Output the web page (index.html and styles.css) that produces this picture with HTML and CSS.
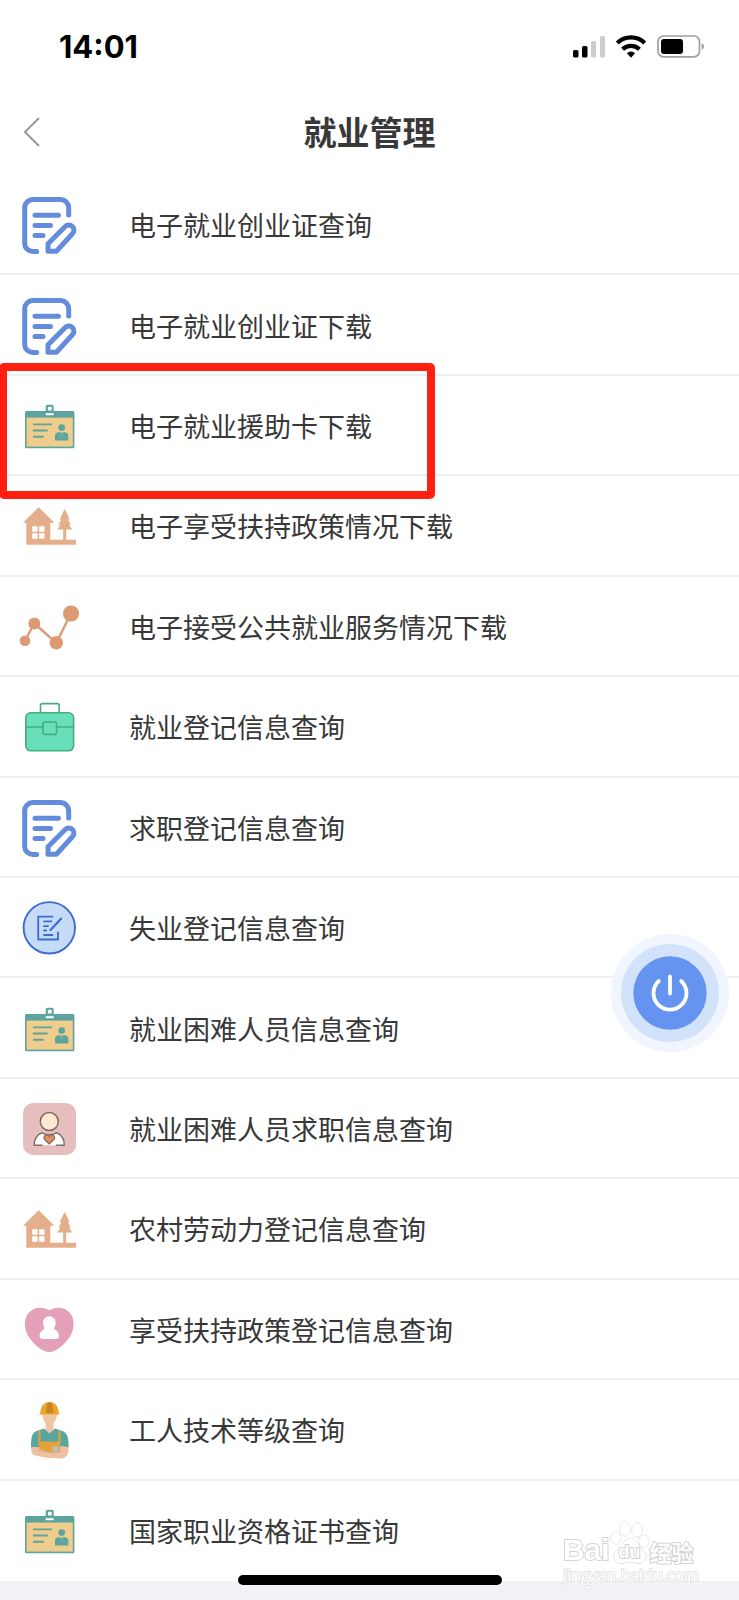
FILE: index.html
```html
<!DOCTYPE html>
<html lang="zh-CN">
<head>
<meta charset="utf-8">
<meta name="viewport" content="width=device-width, initial-scale=1">
<title>就业管理</title>
<link rel="stylesheet" href="styles.css">
</head>
<body>
<svg class="sprite" aria-hidden="true">
  <symbol id="doc" viewBox="0 0 60 60">
    <g fill="none" stroke="#648cdc" stroke-width="5" stroke-linecap="round" stroke-linejoin="round">
      <path d="M49.7 20V12.6a8 8 0 0 0-8-8h-28a8 8 0 0 0-8 8v35.8a8 8 0 0 0 8 8h4"/>
      <path d="M16 20.2h23.4M16 30.5h15.5M16 40.6h8"/>
      <path d="M29 56.2v-7.4L46.2 31.6a5 5 0 0 1 7.2 7.2L37.4 56.2Z"/>
    </g>
  </symbol>
  <symbol id="card" viewBox="0 0 60 60">
    <rect x="6" y="15" width="49.4" height="37.3" rx="1.5" fill="#5ba59e"/>
    <rect x="7.6" y="21.6" width="46.2" height="29" fill="#f1cd8d"/>
    <path d="M26.7 19v-8.6q0-1.6 1.6-1.6h4.8q1.6 0 1.6 1.6V19Z" fill="#5ba59e"/>
    <rect x="28.9" y="10.8" width="3.8" height="3.8" rx=".8" fill="#fff"/>
    <path d="M26.7 17.2h8v2h-8z" fill="#fff"/>
    <path d="M14 28.4h19M14 34.5h14.7M14 40.8h10.7" stroke="#5ba59e" stroke-width="1.9"/>
    <circle cx="42.7" cy="31.6" r="3.3" fill="#5ba59e"/>
    <path d="M36 44.4v-5q0-2 2-2.600l3-1 1.700 7 1.700-7 3 1q2 .6 2 2.600v5Z" fill="#5ba59e"/>
    <path d="m42.700 36 1 1.200-.7 6h-.6l-.7-6z" fill="#5ba59e"/>
  </symbol>
  <symbol id="house" viewBox="0 0 60 60">
    <path d="M19.7 11.2 35.4 26.8h-4.1v17h12.9V33.5h-6l3.3-5h-2l3-5h-1.8l5-10.8 5 10.8h-1.8l3 5h-2l3.3 5h-6v10.3H57v5H7.3V26.8H4Z" fill="#e3ae89"/>
    <path d="M13.3 30.3h5.3v5.4h-5.3zM20.2 30.3h5.3v5.4h-5.3zM13.3 37.3h5.3v5.4h-5.3zM20.2 37.3h5.3v5.4h-5.3z" fill="#fff"/>
  </symbol>
  <symbol id="chart" viewBox="0 0 60 60">
    <path d="m6 43.8 9.3-17.3 22 19.3L52 16.5" fill="none" stroke="#dd9b74" stroke-width="2.4"/>
    <g fill="#dd9b74"><circle cx="6" cy="43.8" r="5.3"/><circle cx="15.3" cy="26.5" r="6"/><circle cx="37.3" cy="45.8" r="6.8"/><circle cx="52" cy="16.5" r="8.1"/></g>
  </symbol>
  <symbol id="briefcase" viewBox="0 0 60 60">
    <g stroke="#49ab80" stroke-width="1.6" fill="#67dfba">
      <path d="M21.5 16V8.6q0-2 2-2h14.7q2 0 2 2V16" fill="none"/>
      <rect x="6.8" y="15.8" width="47.8" height="38" rx="5"/>
      <path d="M6.8 30h47.8"/>
      <rect x="24" y="25" width="13.5" height="12.4" rx="2"/>
    </g>
  </symbol>
  <symbol id="edit" viewBox="0 0 60 60">
    <circle cx="30.3" cy="29.8" r="25.7" fill="#c5dbf7" stroke="#3b6cd1" stroke-width="1.9"/>
    <g fill="none" stroke="#3b6cd1" stroke-width="1.8" stroke-linejoin="round" stroke-linecap="round">
      <path d="M33.5 18.7H19.2v22.8H39v-7.2"/>
      <path d="M25 23.4h7.5M25 28.2h4M25 32.5h2.2M25 37h8.5"/>
      <path d="M31.5 32 42.2 20.6" stroke-width="2.2"/>
    </g>
  </symbol>
  <symbol id="person" viewBox="0 0 60 60">
    <rect x="4" y="4" width="53" height="52" rx="10" fill="#e6bebe"/>
    <path d="M15.3 46.2c-.4-4.8 2-10.4 7.7-12.4 4.500 2.400 10 2.400 14.500 0 5.700 2 8.100 7.600 7.700 12.400Z" fill="#fff"/>
    <path d="M23.500 46.200h-8.200c-.4-4.800 2-10.400 7.700-12.400 4.500 2.400 10 2.400 14.500 0 5.700 2 8.100 7.600 7.700 12.400h-8.200" fill="none" stroke="#806d66" stroke-width="1.500"/>
    <circle cx="30.300" cy="22.500" r="9" fill="#fce9cf" stroke="#806d66" stroke-width="1.500"/>
    <path d="M30.300 45 25.700 40.500c-2.600-3.400 2.200-6.500 4.600-2.900 2.400-3.600 7.200-.5 4.600 2.900Z" fill="#e88b5b" stroke="#806d66" stroke-width="1.200"/>
  </symbol>
  <symbol id="heart" viewBox="0 0 60 60">
    <path d="M30.300 10.200C37 6 46 7 51 13c5.500 6.700 4.500 17-1 25-5 7-13 14-19.700 14S15.500 45 10.500 38C5 30 4 19.700 9.500 13c5-6 14-7 20.800-2.800Z" fill="#e5a0b9"/>
    <path d="M30.300 16.300a6.300 6.300 0 0 1 6.400 6.500c0 2.500-1.200 4-1.700 5.500-.4 1.500 5 1.800 5 7.500 0 2.300-1.300 3.300-3.200 3.300h-13c-1.900 0-3.200-1-3.200-3.300 0-5.700 5.400-6 5-7.500-.5-1.500-1.700-3-1.700-5.500a6.300 6.300 0 0 1 6.400-6.500Z" fill="#fff"/>
  </symbol>
  <symbol id="worker" viewBox="0 0 60 60">
    <path d="M23.500 13h14.400c0 5.500-1.700 8.500-3.400 10.500V30l-4 5-4-5v-6.500c-1.700-2-3-5-3-10.500Z" fill="#f0c6a5"/>
    <path d="M12 47.500c0-8 .4-14.500 5-16.300l8-2.700 5.500 5 5.500-5 8 2.700c4.800 1.800 5.700 8.300 5.700 16.300l-6 2H18Z" fill="#58a69e"/>
    <path d="M12 47h7l22-1 8.500 1c.6 7-2.500 11-6 11.300-8 .8-22-1.300-28-3-2.700-.8-3.500-4.500-3.500-8.300Z" fill="#ecc0a0"/>
    <path d="M20.500 31v11.500h20V31" fill="none" stroke="#dfa23d" stroke-width="2.200"/>
    <path d="M19.500 42h21.500v10H28l-8-3Z" fill="#e3a33b"/>
    <path d="M18 51c8-1 12 2.500 17 2l8-2" fill="none" stroke="#dba788" stroke-width="1"/>
    <rect x="33.500" y="46.500" width="6" height="5" rx="1" fill="#b5c1cb"/>
    <path d="M21.200 13.300C21.600 6 25 2 30.500 2s9 4 9.400 11.300l1.100 1.200H20Z" fill="#eba52c"/>
    <path d="M27 13c.2-4.500.8-8 1.800-10.500h3.500C33.500 5 34 8.500 34.200 13Z" fill="#c98525"/>
  </symbol>
</svg>

<header class="header">
  <div class="status">
    <time class="clock">14:01</time>
    <svg class="indicators" viewBox="0 0 132 24" aria-label="信号、无线网络和电池">
      <rect x="0" y="15" width="5.5" height="7.5" rx="1.5"/>
      <rect x="9" y="11" width="5.5" height="11.5" rx="1.5"/>
      <g fill="#cdcdcd"><rect x="18" y="6" width="5" height="16.5" rx="1.5"/><rect x="27" y="1" width="5" height="21.5" rx="1.5"/></g>
      <g fill="none" stroke="#000" stroke-width="4.2"><path d="M44.3 8.1a19.300 19.300 0 0 1 27.400 0"/><path d="M49.600 14.300a11.900 11.900 0 0 1 16.800 0"/></g>
      <path d="M53.900 18.300a5.800 5.800 0 0 1 8.200 0L58 22.700Z"/>
      <rect x="85" y="1" width="41.500" height="20.800" rx="5.500" fill="none" stroke="#9f9f9f" stroke-width="1.700"/>
      <rect x="88" y="4" width="22" height="15" rx="3"/>
      <path d="M128.700 8.500q2.300.7 2.300 3t-2.300 3Z" fill="#999"/>
    </svg>
  </div>
  <nav class="nav">
    <button class="back" type="button" aria-label="返回">
      <svg viewBox="0 0 18 32" width="18" height="32"><path d="M16 2 2 16l14 14" fill="none" stroke="#999" stroke-width="2"/></svg>
    </button>
    <h1 class="title">就业管理</h1>
  </nav>
</header>

<main class="list">
  <a class="row" href="#"><svg class="icon"><use href="#doc"/></svg><span>电子就业创业证查询</span></a>
  <a class="row" href="#"><svg class="icon"><use href="#doc"/></svg><span>电子就业创业证下载</span></a>
  <a class="row marked" href="#"><svg class="icon"><use href="#card"/></svg><span>电子就业援助卡下载</span></a>
  <a class="row" href="#"><svg class="icon"><use href="#house"/></svg><span>电子享受扶持政策情况下载</span></a>
  <a class="row" href="#"><svg class="icon"><use href="#chart"/></svg><span>电子接受公共就业服务情况下载</span></a>
  <a class="row" href="#"><svg class="icon"><use href="#briefcase"/></svg><span>就业登记信息查询</span></a>
  <a class="row" href="#"><svg class="icon"><use href="#doc"/></svg><span>求职登记信息查询</span></a>
  <a class="row" href="#"><svg class="icon"><use href="#edit"/></svg><span>失业登记信息查询</span></a>
  <a class="row" href="#"><svg class="icon"><use href="#card"/></svg><span>就业困难人员信息查询</span></a>
  <a class="row" href="#"><svg class="icon"><use href="#person"/></svg><span>就业困难人员求职信息查询</span></a>
  <a class="row" href="#"><svg class="icon"><use href="#house"/></svg><span>农村劳动力登记信息查询</span></a>
  <a class="row" href="#"><svg class="icon"><use href="#heart"/></svg><span>享受扶持政策登记信息查询</span></a>
  <a class="row" href="#"><svg class="icon"><use href="#worker"/></svg><span>工人技术等级查询</span></a>
  <a class="row" href="#"><svg class="icon"><use href="#card"/></svg><span>国家职业资格证书查询</span></a>
</main>

<footer class="bottom"></footer>

<button class="power" type="button" aria-label="退出">
  <svg viewBox="0 0 118 118" width="118" height="118">
    <circle cx="59" cy="59" r="59" fill="#edf3fe" fill-opacity=".85"/>
    <circle cx="59" cy="59" r="49" fill="#d0e0fc" fill-opacity=".9"/>
    <circle cx="59" cy="59" r="36.7" fill="#6593f0"/>
    <path d="M47.8 47a16.500 16.500 0 1 0 22.400 0M59 42.500v17" fill="none" stroke="#fff" stroke-width="3.800" stroke-linecap="round"/>
  </svg>
</button>

<div class="watermark">
  <div class="brand">
    <span class="bai">Bai</span>
    <span class="paw">
      <svg viewBox="0 0 40 44" width="40" height="44">
        <g fill="#fff" stroke="#cfcfcf" stroke-width="1">
          <ellipse cx="6" cy="17" rx="5" ry="6"/><ellipse cx="15" cy="8" rx="5" ry="7"/><ellipse cx="27" cy="9" rx="5" ry="7"/><ellipse cx="34" cy="20" rx="5" ry="6"/>
          <path d="M20 18c5 0 8 5 11 9s6 6 5 10-5 6-9 5c-5-1-9-1-14 0-4 1-8-1-9-5s2-7 5-10 6-9 11-9Z"/>
        </g>
      </svg>
      <span class="du">du</span>
    </span>
    <span class="jingyan">经验</span>
  </div>
  <div class="site">jingyan.baidu.com</div>
</div>
<div class="home-bar"></div>
</body>
</html>
```
FILE: styles.css
```css
*,
*::after {
  box-sizing: border-box;
}

body {
  margin: 0;
  min-height: 100vh;
  display: flex;
  flex-direction: column;
  background: #fff;
  color: #383838;
  font-family: "Noto Sans CJK SC", sans-serif;
}

.sprite {
  display: none;
}

button {
  border: 0;
  padding: 0;
  background: none;
  cursor: pointer;
}

.header {
  padding-bottom: 4px;
}

.status {
  height: 92px;
  padding: 2px 34px 0 59px;
  display: flex;
  align-items: center;
  justify-content: space-between;
}

.clock {
  color: #000;
  font: 700 31px/32px Inter, sans-serif;
}

.indicators {
  width: 132px;
  height: 24px;
}

.nav {
  height: 79px;
  padding: 0 23px;
  display: grid;
  grid-template-columns: 1fr auto 1fr;
  align-items: center;
}

.back {
  display: flex;
  justify-self: start;
}

.title {
  margin: 0;
  font-size: 33px;
  line-height: 40px;
  padding-bottom: 2px;
  font-weight: 700;
}

.list {
  flex: 1;
  display: grid;
  grid-auto-rows: 1fr;
}

.row {
  position: relative;
  min-height: 80px;
  padding: 2px 19px 0;
  display: flex;
  align-items: center;
  gap: 50px;
  border-bottom: 2px solid #f0f0f0;
  color: inherit;
  font-size: 27px;
  line-height: 36px;
  text-decoration: none;
}

.row:last-child {
  border-bottom-color: transparent;
}

.icon {
  flex: none;
  width: 60px;
  height: 60px;
}

.marked::after {
  content: "";
  position: absolute;
  z-index: 1;
  top: -13px;
  left: -1px;
  width: 436px;
  height: 136px;
  border: 8px solid #ff2011;
  border-radius: 5px;
}

.bottom {
  height: 19px;
  background: #f1f1f6;
}

.power {
  position: fixed;
  right: 10px;
  bottom: 548px;
  display: flex;
  border-radius: 50%;
}

.home-bar {
  position: fixed;
  bottom: 15px;
  left: 50%;
  width: 264px;
  height: 10px;
  margin-left: -132px;
  border-radius: 5px;
  background: #000;
}

.watermark {
  position: fixed;
  right: 40px;
  bottom: 15px;
  color: #fff;
  -webkit-text-stroke: 2px #d4d4d4;
  paint-order: stroke fill;
}

.brand {
  display: flex;
  align-items: flex-end;
}

.bai {
  font: 700 30px/30px "Liberation Sans", sans-serif;
}

.paw {
  position: relative;
  display: flex;
}

.du {
  position: absolute;
  inset: auto 0 3px;
  text-align: center;
  font: 700 18px/20px "Liberation Sans", sans-serif;
}

.jingyan {
  font-size: 22px;
  line-height: 28px;
  font-weight: 700;
}

.site {
  text-align: center;
  font: 400 16px/20px "Open Sans", sans-serif;
  -webkit-text-stroke-color: #e4e4e4;
}
```
